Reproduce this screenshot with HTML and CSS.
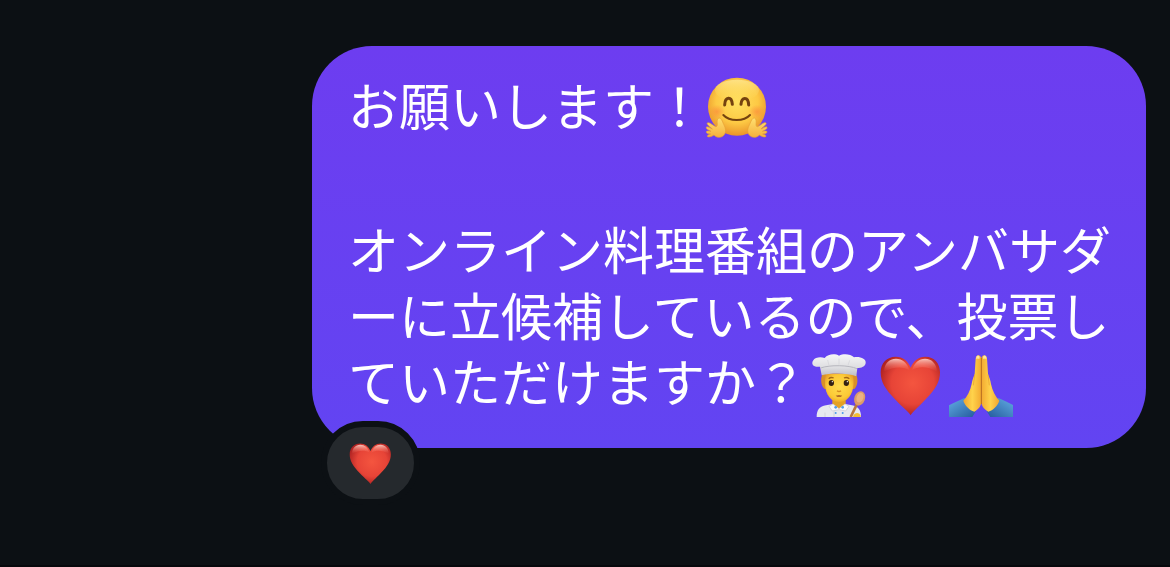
FILE: index.html
```html
<!DOCTYPE html>
<html lang="ja">
<head>
    <meta charset="UTF-8">
    <meta name="viewport" content="width=device-width, initial-scale=1">
    <link rel="stylesheet" href="styles.css">
</head>
<body>
    <main class="chat">
        <div class="message">
            <p>お願いします！<svg class="emoji" viewBox="30 30 192 192" aria-hidden="true">
                <defs>
                    <radialGradient id="face" cx="50%" cy="42%" r="60%">
                        <stop offset="0" stop-color="#ffe05f"/>
                        <stop offset="0.6" stop-color="#fdc944"/>
                        <stop offset="1" stop-color="#e88f28"/>
                    </radialGradient>
                    <linearGradient id="shine" x1="0" y1="0" x2="0" y2="1">
                        <stop offset="0" stop-color="#fff4b0" stop-opacity="0.6"/>
                        <stop offset="1" stop-color="#ffe56b" stop-opacity="0"/>
                    </linearGradient>
                    <radialGradient id="blush">
                        <stop offset="0" stop-color="#fb8b3c" stop-opacity="0.7"/>
                        <stop offset="1" stop-color="#fb8b3c" stop-opacity="0"/>
                    </radialGradient>
                    <linearGradient id="palm" x1="0" y1="0" x2="0" y2="1">
                        <stop offset="0" stop-color="#ffe070"/>
                        <stop offset="1" stop-color="#f5b03c"/>
                    </linearGradient>
                    <path id="hug-hand" d="M57 204C50 209 41 211 38 209C35 206 40 203 47 201C40 201 34 199 34 195C34 191 40 192 48 193C40 189 32 185 34 181C36 177 44 182 52 186C45 179 34 172 37 168C40 164 51 172 60 178C64 181 67 178 67 172C66 163 66 154 72 153C79 153 82 163 86 172C94 187 94 199 84 207C76 213 64 212 57 204Z"/>
                </defs>
                <circle cx="126" cy="119" r="87" fill="url(#face)"/>
                <ellipse cx="126" cy="70" rx="66" ry="32" fill="url(#shine)"/>
                <ellipse cx="66" cy="134" rx="25" ry="21" fill="url(#blush)"/>
                <ellipse cx="186" cy="134" rx="25" ry="21" fill="url(#blush)"/>
                <path d="M89 114C90 88 110 87 112 112M138 112C139 88 160 88 161 114" fill="none" stroke="#74420f" stroke-width="9" stroke-linecap="round"/>
                <path d="M85 144C103 164 147 164 165 144" fill="none" stroke="#74420f" stroke-width="6" stroke-linecap="round"/>
                <g fill="url(#palm)" stroke="#e7a034" stroke-width="2">
                    <use href="#hug-hand"/>
                    <use href="#hug-hand" transform="translate(250 0) scale(-1 1)"/>
                </g>
            </svg></p>
            <p>オンライン料理番組のアンバサダーに立候補しているので、投票していただけますか？<svg class="emoji" viewBox="18 21 192 192" aria-hidden="true">
                <defs>
                    <linearGradient id="hat" x1="0" y1="0" x2="0" y2="1">
                        <stop offset="0" stop-color="#f6f6f6"/>
                        <stop offset="0.6" stop-color="#dedee1"/>
                        <stop offset="1" stop-color="#bdbdc3"/>
                    </linearGradient>
                    <radialGradient id="skin" cx="50%" cy="45%" r="60%">
                        <stop offset="0" stop-color="#ffdc4d"/>
                        <stop offset="0.7" stop-color="#fcc936"/>
                        <stop offset="1" stop-color="#e89e26"/>
                    </radialGradient>
                </defs>
                <path d="M65 82C57 101 60 121 71 129L160 129C171 118 172 99 164 82Z" fill="#d99028"/>
                <path d="M94 151H134V180L114 198L94 180Z" fill="#e4a125"/>
                <path d="M47 213C47 191 56 181 75 178L96 174L114 190L132 174L153 178C171 181 180 191 180 213Z" fill="#e7e9ef"/>
                <path d="M96 174L84 181L94 195L114 191L134 195L144 181L132 174L114 188Z" fill="#f8f8fa" stroke="#c5c8d2" stroke-width="2"/>
                <path d="M99 196V213M72 200V213" stroke="#c5c8d2" stroke-width="2"/>
                <g fill="#4d9bea">
                    <circle cx="104" cy="184" r="4"/>
                    <circle cx="125" cy="184" r="4"/>
                    <circle cx="104" cy="201" r="3"/>
                    <circle cx="125" cy="201" r="3"/>
                </g>
                <path d="M75 84H155C161 112 158 143 138 160C124 171 105 171 91 160C71 143 69 112 75 84Z" fill="url(#skin)"/>
                <path d="M83 98Q90 92 98 96M129 96Q137 92 145 98" fill="none" stroke="#a36616" stroke-width="4"/>
                <ellipse cx="91" cy="111" rx="8" ry="9" fill="#352213"/>
                <ellipse cx="136" cy="111" rx="8" ry="9" fill="#352213"/>
                <circle cx="94" cy="107" r="2" fill="#fff"/>
                <circle cx="139" cy="107" r="2" fill="#fff"/>
                <path d="M108 134Q114 139 120 134" fill="none" stroke="#d68d20" stroke-width="4"/>
                <path d="M104 149Q114 146 124 149Q114 156 104 149Z" fill="#9c4a22"/>
                <path d="M62 88L57 62C37 65 30 54 36 44C42 34 58 32 71 36C81 23 103 22 114 29C128 22 149 24 159 34C178 31 196 39 194 51C193 62 181 66 169 66L166 91C138 80 89 80 62 88Z" fill="url(#hat)"/>
                <path d="M59 66C87 56 143 57 168 68" fill="none" stroke="#b7b7be" stroke-width="3"/>
                <path d="M80 42L84 58M146 43L141 58M114 38V56" stroke="#d2d2d7" stroke-width="2"/>
                <path d="M149 213L170 170" stroke="#b9773f" stroke-width="8"/>
                <ellipse cx="176" cy="157" rx="16" ry="22" transform="rotate(20 176 157)" fill="#dc9c68"/>
                <ellipse cx="177" cy="155" rx="10" ry="15" transform="rotate(20 177 155)" fill="#eab383"/>
                <path d="M158 206Q166 198 175 203Q180 207 179 213H156Z" fill="#f2bd36"/>
            </svg><svg class="emoji" viewBox="21 21 192 192" aria-hidden="true">
                <defs>
                    <radialGradient id="red" cx="54%" cy="45%" r="60%">
                        <stop offset="0" stop-color="#f4553f"/>
                        <stop offset="0.6" stop-color="#e74437"/>
                        <stop offset="1" stop-color="#a91f20"/>
                    </radialGradient>
                    <linearGradient id="gloss" x1="0" y1="0" x2="0" y2="1">
                        <stop offset="0" stop-color="#ffe0d6" stop-opacity="0.85"/>
                        <stop offset="1" stop-color="#ff6b58" stop-opacity="0"/>
                    </linearGradient>
                    <g id="heart">
                        <path d="M119 208C114 199 98 187 72 160C43 130 29 108 29 79C29 51 48 32 74 32C96 32 111 45 119 65C127 45 142 32 163 32C190 32 207 52 207 79C207 108 193 131 164 160C138 187 124 199 119 208Z" fill="url(#red)"/>
                        <path d="M39 77C40 53 54 38 75 38C94 38 109 51 115 72C94 60 67 62 39 77Z" fill="url(#gloss)"/>
                        <path d="M123 72C129 51 144 38 162 38C183 38 197 54 198 77C170 61 144 60 123 72Z" fill="url(#gloss)"/>
                    </g>
                </defs>
                <use href="#heart"/>
            </svg><svg class="emoji" viewBox="30 21 192 192" aria-hidden="true">
                <defs>
                    <linearGradient id="hand" x1="0" y1="0" x2="1" y2="0">
                        <stop offset="0" stop-color="#f0a52e"/>
                        <stop offset="0.5" stop-color="#ffd34b"/>
                        <stop offset="1" stop-color="#f3aa31"/>
                    </linearGradient>
                    <linearGradient id="sleeve" x1="0" y1="0" x2="1" y2="1">
                        <stop offset="0" stop-color="#62aee5"/>
                        <stop offset="1" stop-color="#245a9c"/>
                    </linearGradient>
                    <g id="praying">
                        <path d="M30 178C44 171 59 164 76 156L111 195L100 213H30Z" fill="url(#sleeve)"/>
                        <path d="M127 37C124 24 112 25 110 37L107 83C104 93 100 101 98 114C94 134 85 151 73 164C77 178 92 193 106 197C116 192 126 182 127 169Z" fill="url(#hand)"/>
                        <path d="M112 32Q117 25 122 32L121 39Q116 36 112 39Z" fill="#ffe6a1"/>
                        <path d="M107 86L103 118" stroke="#e59d2d" stroke-width="2"/>
                    </g>
                </defs>
                <use href="#praying"/>
                <use href="#praying" transform="translate(254 0) scale(-1 1)"/>
                <path d="M127 36V174" stroke="#bc7018" stroke-width="3"/>
            </svg></p>
            <button class="reaction" type="button" aria-label="❤️">
                <svg viewBox="26 26 186 186" aria-hidden="true"><use href="#heart"/></svg>
            </button>
        </div>
    </main>
</body>
</html>
```
FILE: styles.css
```css
* {
    box-sizing: border-box;
}
body {
    margin: 0;
    background-color: #0c1014;
    color: white;
    font-family: "Noto Sans CJK JP", sans-serif;
}
.chat {
    min-height: 100vh;
    padding: 46px 24px 46px 312px;
    border-bottom: 2px solid #07080c;
}
.message {
    position: relative;
    padding: 25px 30px 35px 36px;
    border-radius: 60px;
    background: linear-gradient(#6d3df0, #6244f2);
    font-size: 51px;
    line-height: 66px;
    line-break: anywhere;
}
.message p {
    margin: 0;
}
.message p + p {
    margin-top: 78px;
}
.emoji {
    width: 64px;
    height: 64px;
    margin: 6px 7px -4px 0;
    vertical-align: top;
}

/* overlaps the bottom left corner of the bubble */
.reaction {
    position: absolute;
    left: 9px;
    bottom: -57px;
    display: flex;
    align-items: center;
    justify-content: center;
    width: 99px;
    height: 84px;
    padding: 0;
    border: 6px solid #0c1014;
    border-radius: 42px;
    background-color: #25292d;
    cursor: pointer;
}
.reaction svg {
    width: 43px;
    height: 43px;
}
```
